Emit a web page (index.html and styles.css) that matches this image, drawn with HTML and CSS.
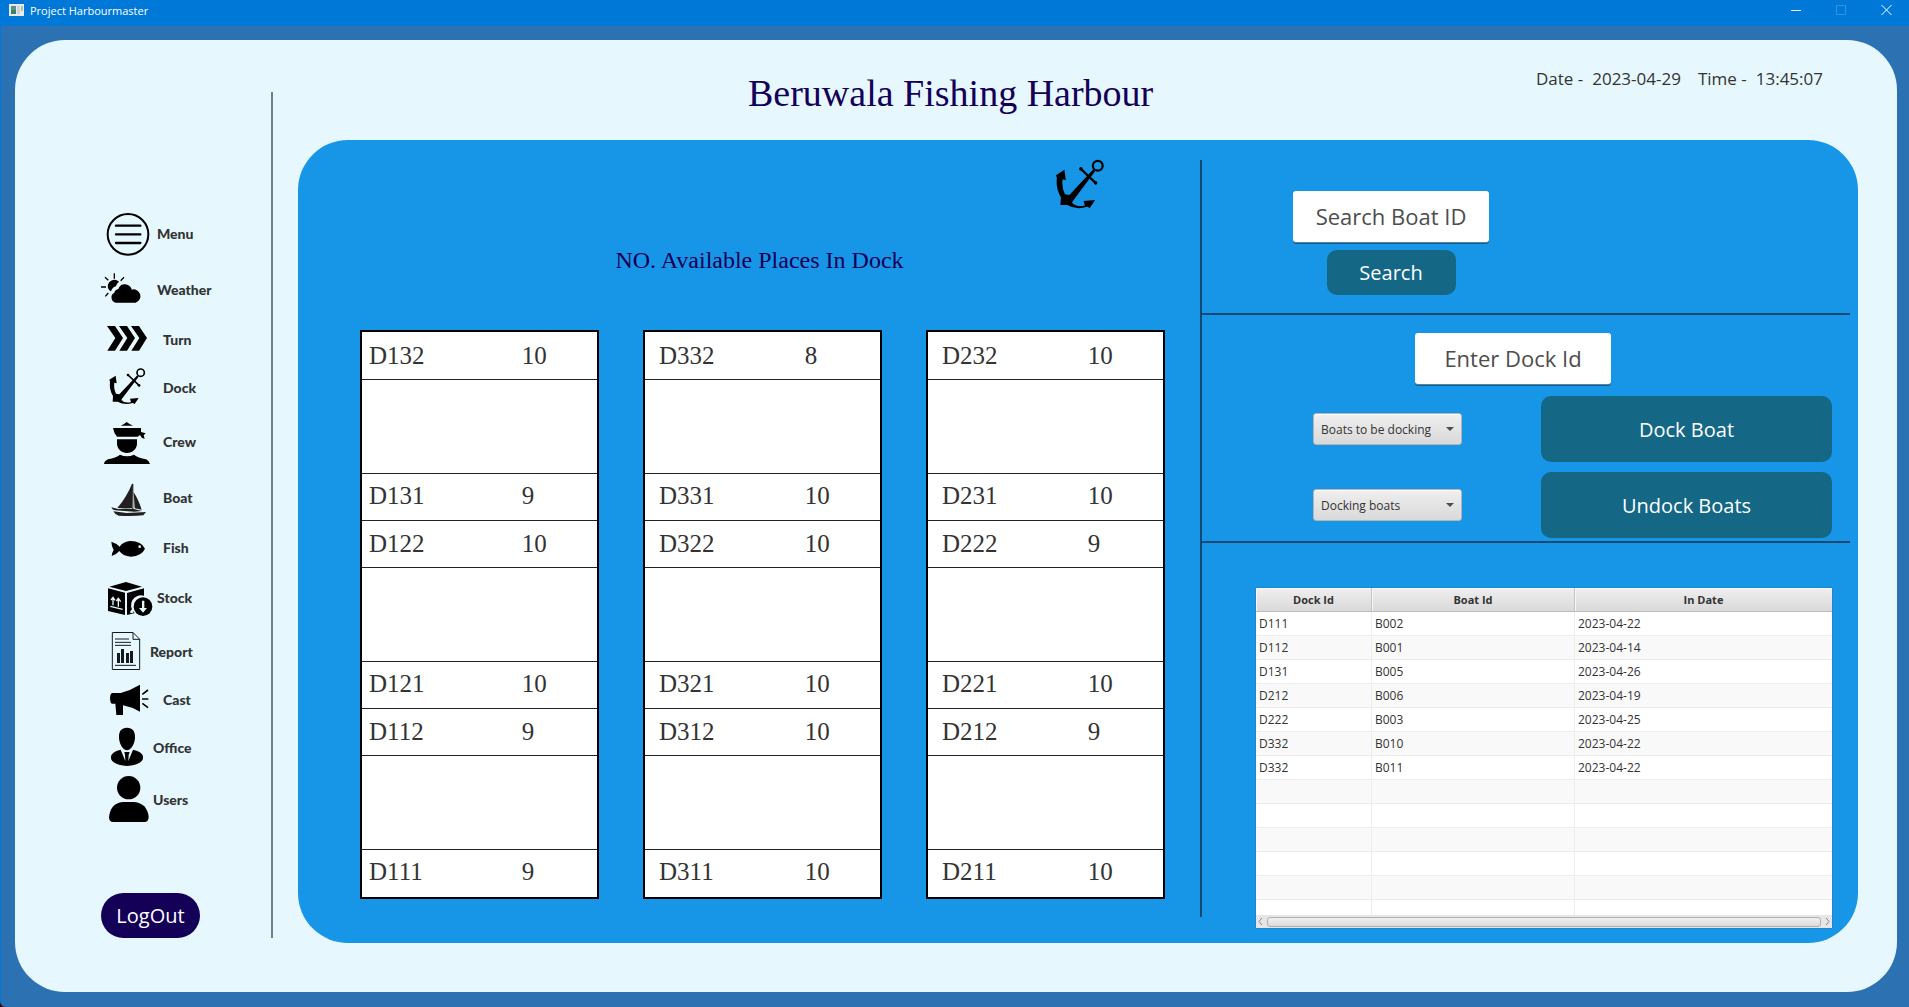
FILE: index.html
```html
<!DOCTYPE html>
<html lang="en">
<head>
<meta charset="utf-8">
<title>Project Harbourmaster</title>
<meta name="viewport" content="width=device-width, initial-scale=1">
<link rel="stylesheet" href="styles.css">
</head>
<body>
<div class="window">
  <header class="titlebar">
    <svg class="titlebar-icon" viewBox="0 0 15 12" aria-hidden="true"><path fill="#e9e9e9" d="M0 0h15v12H0z"/><path fill="#5a8f8a" d="M2 2h5v8H2z"/><path fill="#3f7f6a" d="M2 6h5v4H2z"/><path fill="#cfd3d3" d="M8 2h3v8H8z"/><path fill="#a9c4b4" d="M12 2h2v5h-2z"/></svg>
    <span class="titlebar-text">Project Harbourmaster</span>
    <button class="win-btn" aria-label="Minimise"><svg viewBox="0 0 11 11"><path d="M0 6.5h10"/></svg></button>
    <button class="win-btn win-btn-off" aria-label="Maximise" disabled><svg viewBox="0 0 11 11"><path d="M.5 1.5h9v9h-9z"/></svg></button>
    <button class="win-btn" aria-label="Close"><svg viewBox="0 0 11 11"><path d="M.5 1l10 10M10.500 1l-10 10"/></svg></button>
  </header>

  <div class="shell">
    <aside class="sidebar">
      <nav class="nav" aria-label="Main">
        <button class="nav-item mid"><svg class="tall" viewBox="60 18 150 168"><g fill="none" stroke="#000" stroke-width="6"><circle cx="144" cy="103" r="61"/><path stroke-width="7" stroke-linecap="round" d="M108 77h73M108 103h73M108 129h73"/></g></svg><span>Menu</span></button>
        <button class="nav-item mid"><svg class="tall" viewBox="60 186 150 168"><path d="M108 308a16 16 0 0 1-5-30 15 15 0 0 1 12-11 21 21 0 0 1 36-7q4 4 4 9a20 20 0 0 1 12 39z"/><path d="M84 264a20 20 0 0 1 33-19q-7 5-9 14-10 2-15 15-7-3-9-10z"/><path fill="none" stroke="#000" stroke-width="4" d="M103 220v16M75 232l10 9M132 232l-10 10M63 261h15M76 289l9-10"/></svg><span>Weather</span></button>
        <button class="nav-item far"><svg class="short" viewBox="60 354 150 132"><path d="M81 378h24l24 36-24 38H82l24-38zM117 378h24l24 36-24 38h-23l24-38zM153 378h24l24 36-24 38h-23l24-38z"/></svg><span>Turn</span></button>
        <button class="nav-item far"><svg class="medium" viewBox="60 486 150 156"><use href="#anchor"/></svg><span>Dock</span></button>
        <button class="nav-item far"><svg class="tall" viewBox="60 12 150 168"><path d="M122 47q9-3 18-11 10 8 19 11zM99 54h84v12l14 4-6 6 3 10-8-2-6-9-7 5H111q-9-9-12-26zM111 88h60v12c0 18-14 29-30 29s-30-11-30-29zM120 134q21 10 42 0 12 9 36 14 9 4 12 14H72q1-9 12-14 24-5 36-14z"/></svg><span>Crew</span></button>
        <button class="nav-item far"><svg class="tall" viewBox="60 180 150 168"><path fill="#231f20" d="M157 219l-1 75H112q28-32 45-75zM161 247q14 21 24 52l-21-4zM157 222h3v78h-3zM94 292l20 5q40-4 72 6l-23 2-58-4q-9-2-11-9zM100 304l40 5 58-3-8 10q-32 3-74 1-12-4-16-13z"/></svg><span>Boat</span></button>
        <button class="nav-item far"><svg class="short" viewBox="60 348 150 132"><path d="M94 395q16 5 25 15 8-14 30-17 35-1 46 23-10 22-42 24-25-2-35-17-7 9-23 15 1-10 6-18-7-14-7-25z"/><circle cx="179" cy="410" r="4" fill="#e6f8fd"/></svg><span>Fish</span></button>
        <button class="nav-item mid"><svg class="tall" viewBox="60 480 150 168"><path d="M88 530l50-14 48 14-48 13zM84 535l51 13v67l-51-12zM141 549l51-14v22a30 30 0 0 0-29 51l2 1-24 6z"/><circle cx="189" cy="590" r="28"/><path fill="none" stroke="#e6f8fd" stroke-width="4" d="M91 589l37 9M99 586v-23M93 570l6-8 6 9M115 590v-23M109 573l6-8 7 10"/><path fill="#e6f8fd" d="M186 572h7v22h8l-12 14-12-14h9zM151 603l9-9v14l-9 2z"/></svg><span>Stock</span></button>
        <button class="nav-item"><svg class="medium" viewBox="60 18 150 156"><path fill="none" stroke="#16181d" stroke-width="3" d="M97 37.500h62l20 20v91H97zM159 38v20h20M105 57h42M105 67h48M105 76h48M105 136h63"/><path fill="#16181d" d="M111 99h9v30h-9zM123 87h9v42h-9zM138 99h9v30h-9zM150 93h9v36h-9z"/></svg><span>Report</span></button>
        <button class="nav-item far"><svg class="short" viewBox="60 174 150 132"><path d="M95 219h27q30-8 58-25v81q-25-14-51-19v29h-20l-3-34H95q-5-4-5-16t5-16z"/><path fill="none" stroke="#000" stroke-width="5" d="M187 223l17-13M186 237h19M187 250l17 13"/></svg><span>Cast</span></button>
        <button class="nav-item near"><svg class="medium" viewBox="60 306 150 156"><path d="M141 323c18 0 25 12 24 32-2 20-13 36-24 36s-22-16-24-36c-1-20 6-32 24-32zM122 389l14 34-1-18-2-9h16l-3 9-1 18 14-34q30 7 30 22c2 15-20 26-48 27-28-1-50-12-48-27q0-15 29-22z"/></svg><span>Office</span></button>
        <button class="nav-item near"><svg class="medium" viewBox="60 462 150 156"><circle cx="146" cy="503" r="35"/><path d="M128 546h35q38 4 43 44 0 16-13 16H100q-13 0-13-14 4-42 41-46z"/></svg><span>Users</span></button>
      </nav>
      <button class="logout">LogOut</button>
    </aside>

    <main class="main">
      <div class="topline">
        <h1>Beruwala Fishing Harbour</h1>
        <p class="clock"><span>Date -</span> <time>2023-04-29</time> <span class="clock-time">Time -</span> <time>13:45:07</time></p>
      </div>

      <div class="board">
        <section class="docks-pane">
          <svg class="anchor-mark" viewBox="88 503 108 111" preserveAspectRatio="none" aria-hidden="true"><g id="anchor"><circle cx="182" cy="518" r="11" fill="none" stroke="#000" stroke-width="5"/><path d="M172 526l4 4-50 66-2 4q11 11 29 6l-3-10 26-2-12 18-6-3q-24 8-45-4h-15l1-17q-12-20-9-43l-2-6 19-12 3 23-7-2q-3 16 5 33l10 2z"/><path stroke="#000" stroke-width="5" stroke-linecap="round" d="M144 525l34 32"/><circle cx="144" cy="525" r="4"/><circle cx="177" cy="556" r="4"/></g></svg>
          <h2>NO. Available Places In Dock</h2>
          <div class="docks">
            <table class="dock">
              <tr><th scope="row">D132</th><td>10</td></tr>
              <tr class="gap"><td colspan="2"></td></tr>
              <tr><th scope="row">D131</th><td>9</td></tr>
              <tr><th scope="row">D122</th><td>10</td></tr>
              <tr class="gap"><td colspan="2"></td></tr>
              <tr><th scope="row">D121</th><td>10</td></tr>
              <tr><th scope="row">D112</th><td>9</td></tr>
              <tr class="gap"><td colspan="2"></td></tr>
              <tr><th scope="row">D111</th><td>9</td></tr>
            </table>
            <table class="dock dock-inset">
              <tr><th scope="row">D332</th><td>8</td></tr>
              <tr class="gap"><td colspan="2"></td></tr>
              <tr><th scope="row">D331</th><td>10</td></tr>
              <tr><th scope="row">D322</th><td>10</td></tr>
              <tr class="gap"><td colspan="2"></td></tr>
              <tr><th scope="row">D321</th><td>10</td></tr>
              <tr><th scope="row">D312</th><td>10</td></tr>
              <tr class="gap"><td colspan="2"></td></tr>
              <tr><th scope="row">D311</th><td>10</td></tr>
            </table>
            <table class="dock dock-inset">
              <tr><th scope="row">D232</th><td>10</td></tr>
              <tr class="gap"><td colspan="2"></td></tr>
              <tr><th scope="row">D231</th><td>10</td></tr>
              <tr><th scope="row">D222</th><td>9</td></tr>
              <tr class="gap"><td colspan="2"></td></tr>
              <tr><th scope="row">D221</th><td>10</td></tr>
              <tr><th scope="row">D212</th><td>9</td></tr>
              <tr class="gap"><td colspan="2"></td></tr>
              <tr><th scope="row">D211</th><td>10</td></tr>
            </table>
          </div>
        </section>

        <div class="divider"></div>

        <section class="side-pane">
          <form class="search">
            <input class="field" type="text" placeholder="Search Boat ID" aria-label="Search Boat ID">
            <button class="btn btn-small" type="button">Search</button>
          </form>
          <form class="docking">
            <input class="field" type="text" placeholder="Enter Dock Id" aria-label="Enter Dock Id">
            <div class="docking-grid">
              <div class="combo"><select aria-label="Boats to be docking"><option>Boats to be docking</option></select></div>
              <button class="btn" type="button">Dock Boat</button>
              <div class="combo"><select aria-label="Docking boats"><option>Docking boats</option></select></div>
              <button class="btn" type="button">Undock Boats</button>
            </div>
          </form>
          <div class="records">
            <div class="records-view">
              <table>
                <colgroup><col class="c-dock"><col class="c-boat"><col></colgroup>
                <thead><tr><th>Dock Id</th><th>Boat Id</th><th>In Date</th></tr></thead>
                <tbody>
                  <tr><td>D111</td><td>B002</td><td>2023-04-22</td></tr>
                  <tr><td>D112</td><td>B001</td><td>2023-04-14</td></tr>
                  <tr><td>D131</td><td>B005</td><td>2023-04-26</td></tr>
                  <tr><td>D212</td><td>B006</td><td>2023-04-19</td></tr>
                  <tr><td>D222</td><td>B003</td><td>2023-04-25</td></tr>
                  <tr><td>D332</td><td>B010</td><td>2023-04-22</td></tr>
                  <tr><td>D332</td><td>B011</td><td>2023-04-22</td></tr>
                  <tr><td></td><td></td><td></td></tr>
                  <tr><td></td><td></td><td></td></tr>
                  <tr><td></td><td></td><td></td></tr>
                  <tr><td></td><td></td><td></td></tr>
                  <tr><td></td><td></td><td></td></tr>
                  <tr><td></td><td></td><td></td></tr>
                </tbody>
              </table>
            </div>
            <div class="scrollbar" aria-hidden="true">
              <svg viewBox="0 0 5 9"><path d="M4 1L1 4.500 4 8"/></svg>
              <span class="thumb"></span>
              <svg viewBox="0 0 5 9"><path d="M1 1l3 3.500L1 8"/></svg>
            </div>
          </div>
        </section>
      </div>
    </main>
  </div>
</div>
</body>
</html>
```
FILE: styles.css
```css
* { box-sizing: border-box; }

:root {
  --ink: #333;
  --navy: #140057;
  --pale: #e6f8fd;
  --blue: #1796e7;
  --teal: #146785;
  --ui: "Segoe UI", "Open Sans", "Noto Sans", sans-serif;
  --serif: "Liberation Serif", serif;
}

body {
  margin: 0;
  background: #3a0808;
  font-family: var(--ui);
  color: var(--ink);
}

button, input, select {
  font-family: inherit;
  margin: 0;
}

button {
  border: 0;
  padding: 0;
  cursor: pointer;
}

.window {
  display: flex;
  flex-direction: column;
  min-height: 100vh;
  background: #2c72b2;
  border-left: 1px solid #0078d7;
  border-bottom-left-radius: 6px;
}

/* Title bar */
.titlebar {
  display: flex;
  align-items: flex-start;
  height: 26px;
  padding-left: 8px;
  background: #0078d7;
  color: #fff;
}

.titlebar-icon {
  width: 15px;
  height: 12px;
  margin: 4px 6px 0 0;
}

.titlebar-text {
  flex: 1;
  font-size: 11px;
  line-height: 22px;
}

.win-btn {
  display: flex;
  justify-content: center;
  width: 45px;
  height: 20px;
  padding-top: 4px;
  background: none;
}

.win-btn svg {
  width: 11px;
  height: 11px;
  fill: none;
  stroke: #fff;
}

.win-btn-off svg { stroke: #3394df; }

/* Shell */
.shell {
  flex: 1;
  display: flex;
  margin: 14px 12px 15px 14px;
  background: var(--pale);
  border-radius: 50px;
}

.sidebar {
  display: flex;
  flex-direction: column;
  align-items: flex-start;
  flex: none;
  width: 258px;
  margin: 52px 0 54px;
  padding: 114px 0 0 85px;
  border-right: 2px solid #737d84;
}

.nav {
  display: flex;
  flex-direction: column;
  align-items: flex-start;
  margin-bottom: auto;
}

.nav-item {
  display: flex;
  align-items: center;
  background: none;
  color: var(--ink);
  font: 900 14px/16px "Britannic Bold", Lato, sans-serif;
}

.nav-item svg {
  width: 50px;
  overflow: visible;
}

.tall { height: 56px; }
.medium { height: 52px; }
.short { height: 44px; }
.near { gap: 3px; }
.mid { gap: 7px; }
.far { gap: 13px; }

.logout {
  width: 99px;
  height: 45px;
  margin-left: 1px;
  border-radius: 23px;
  background: var(--navy);
  color: #fff;
  font-size: 20px;
}

/* Main area */
.main {
  flex: 1;
  display: flex;
  flex-direction: column;
  margin: 0 39px 49px 25px;
}

.topline {
  display: flex;
  justify-content: space-between;
  height: 100px;
  padding: 27px 35px 0 450px;
}

h1 {
  margin: 0;
  color: var(--navy);
  font: 400 38px/52px var(--serif);
}

.clock {
  display: flex;
  gap: 9px;
  margin: 0;
  font-size: 17px;
  line-height: 24px;
}

.clock-time { margin-left: 8px; }

.board {
  flex: 1;
  display: grid;
  grid-template-columns: 1fr 2px 656px;
  background: var(--blue);
  border-radius: 50px;
}

.divider {
  margin: 20px 0 26px;
  background: #104a73;
}

/* Docks */
.docks-pane {
  display: flex;
  flex-direction: column;
  padding: 19px 35px 44px 62px;
}

.anchor-mark {
  width: 48px;
  height: 50px;
  margin: 0 61px 0 auto;
}

h2 {
  margin: 36px 6px 54px 0;
  color: var(--navy);
  font: 400 24px/31px var(--serif);
  text-align: center;
}

.docks {
  display: grid;
  grid-template-columns: repeat(3, 1fr);
  gap: 44px;
}

.dock {
  width: 100%;
  border: 2px solid #000;
  border-spacing: 0;
  background: #fff;
  font: 25px/42px var(--serif);
}

.dock tr { height: 47px; }
.dock tr:first-child { height: 48px; }
.dock .gap { height: 94px; }

.dock th, .dock td {
  padding: 0;
  border-bottom: 1px solid #222;
  font-weight: 400;
  text-align: left;
}

.dock .gap + tr > * { padding-bottom: 3px; }

.dock th {
  width: 68%;
  padding-left: 7px;
}

.dock-inset th { padding-left: 14px; }
.dock tr:last-child > * { border-bottom: 0; }

/* Right-hand forms */
.side-pane { padding-top: 20px; }

.search, .docking {
  margin-right: 8px;
  border-bottom: 2px solid #104a73;
}

.search {
  display: grid;
  grid-template-columns: 196px;
  gap: 8px;
  align-content: start;
  justify-items: center;
  height: 155px;
  padding: 31px 0 0 91px;
}

.field {
  display: block;
  width: 196px;
  height: 51px;
  padding: 0 8px 2px;
  border: 0;
  border-radius: 3px;
  background: #fff;
  box-shadow: 0 1px 0 var(--blue), 0 2px 0 #4d4d4d;
  color: #4d4d4d;
  font-size: 22px;
  text-align: center;
}

.field::placeholder {
  color: #4d4d4d;
  opacity: 1;
}

.btn {
  height: 66px;
  border-radius: 10px;
  background: var(--teal);
  color: #fff;
  font-size: 20px;
}

.btn-small {
  width: 129px;
  height: 45px;
}

.docking { padding: 18px 18px 3px 111px; }
.docking .field { margin-left: 102px; }

.docking-grid {
  display: grid;
  grid-template-columns: 149px 1fr;
  column-gap: 79px;
  row-gap: 10px;
  align-items: center;
  margin-top: 12px;
}

.combo { position: relative; }

.combo::after {
  content: "";
  position: absolute;
  top: 14px;
  right: 8px;
  border: 4px solid transparent;
  border-top-color: #4d4d4d;
  border-bottom: 0;
  pointer-events: none;
}

.combo select {
  appearance: none;
  display: block;
  width: 100%;
  height: 32px;
  padding: 0 7px;
  border: 1px solid #b5b5b5;
  border-radius: 3px;
  background: linear-gradient(#efefef, #d9d9d9);
  box-shadow: inset 0 1px 0 #fff;
  color: var(--ink);
  font-size: 12px;
}

/* Records table */
.records {
  margin: 45px 26px 0 54px;
  box-shadow: 0 0 1px #345;
}

.records-view {
  height: 327px;
  overflow: hidden;
  background: #fff;
}

.records table {
  width: 100%;
  border-spacing: 0;
  table-layout: fixed;
  font-size: 12px;
  line-height: 23px;
}

.c-dock { width: 116px; }
.c-boat { width: 203px; }

.records th {
  height: 24px;
  padding: 0;
  border-right: 1px solid #c3c3c3;
  border-bottom: 1px solid #bbb;
  background: linear-gradient(#efefef, #d9d9d9);
  box-shadow: inset 1px 1px 0 #f7f7f7;
  font-size: 11px;
  font-weight: 700;
}

.records td {
  height: 24px;
  padding: 0 3px;
  border-right: 1px solid #ededed;
  border-bottom: 1px solid #ededed;
}

.records tr:nth-child(even) td { background: #f9f9f9; }
.records tr > :last-child { border-right: 0; }

.scrollbar {
  display: flex;
  align-items: center;
  gap: 4px;
  height: 13px;
  padding: 0 2px;
  background: #e6e6e6;
}

.scrollbar svg {
  width: 5px;
  height: 9px;
  fill: none;
  stroke: #8a8a8a;
}

.thumb {
  flex: 1;
  height: 10px;
  border: 1px solid #b0b0b0;
  border-radius: 3px;
  background: linear-gradient(#f0f0f0, #dcdcdc);
}
```
